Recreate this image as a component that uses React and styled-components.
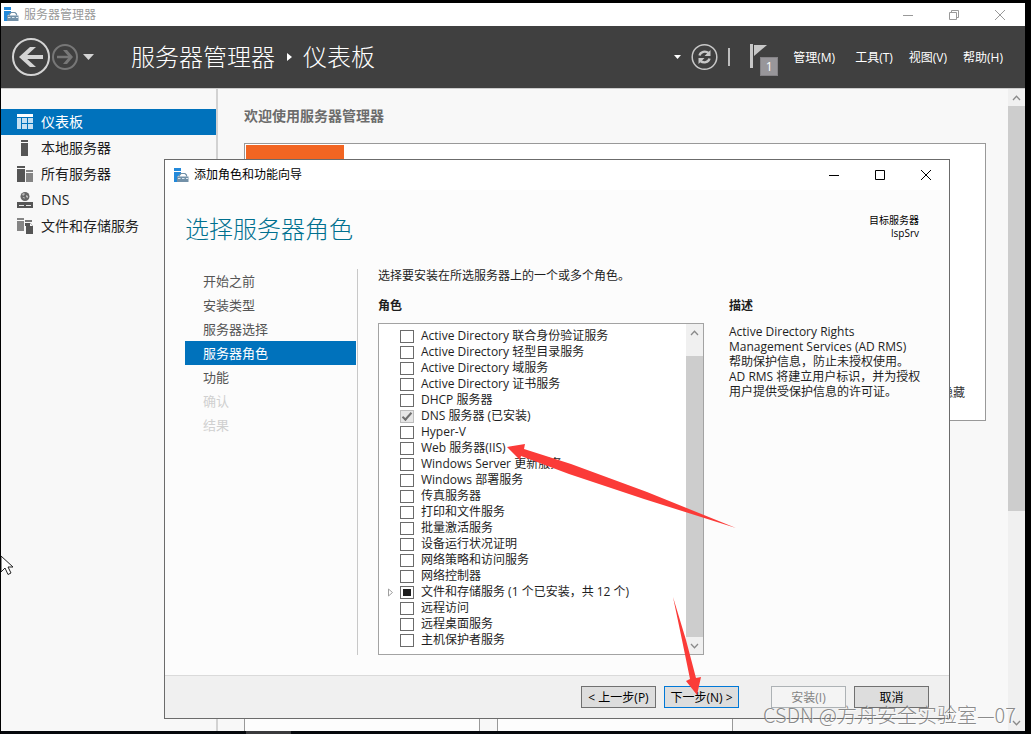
import React from "react";
import styled, { createGlobalStyle, css } from "styled-components";

const GlobalStyle = createGlobalStyle`
  *, *::before, *::after { box-sizing: border-box; }
  body {
    margin: 0;
    background: #000;
    font-family: "Open Sans", "Noto Sans CJK SC", sans-serif;
    font-size: 12px;
    line-height: 16px;
    color: #1e1e1e;
  }
  button, input { font: inherit; margin: 0; padding: 0; }
  button { border: 0; background: none; color: inherit; }
  h1, h2, h3, p, ul { margin: 0; padding: 0; font-weight: 400; }
  ul { list-style: none; }
  svg { display: block; }
`;

const Screen = styled.div`
  position: relative;
  display: flex;
  flex-direction: column;
  min-height: 100vh;
  padding: 3px 6px 0 1px;
  overflow: hidden;
`;

const Taskbar = styled.footer`
  height: 3px;
  padding-left: 245px;
  background: #05080c;
`;

const TaskItem = styled.div`
  width: 45px;
  height: 3px;
  background: #3a3a3c;
`;

const ManagerWindow = styled.div`
  flex: 1;
  display: flex;
  flex-direction: column;
  background: #f8f8f8;
`;

const TitleBar = styled.div`
  display: flex;
  align-items: center;
  gap: 5px;
  height: ${(p) => (p.$dialog ? "30px" : "23px")};
  padding-left: ${(p) => (p.$dialog ? "9px" : "3px")};
  padding-right: ${(p) => (p.$dialog ? "0" : "2px")};
  background: #fff;
  color: ${(p) => (p.$dialog ? "#000" : "#999")};
`;

const TitleText = styled.span`
  flex: 1;
`;

const CaptionGroup = styled.div`
  display: flex;
`;

const CaptionButton = styled.button`
  display: flex;
  justify-content: center;
  width: 46px;
`;

const Header = styled.header`
  display: flex;
  align-items: center;
  height: 62px;
  padding: 0 22px 0 10px;
  background: #404040;
  color: #fff;
`;

const NavButtons = styled.div`
  display: flex;
  align-items: center;
  width: 120px;
`;

const Crumbs = styled.h1`
  flex: 1;
  display: flex;
  align-items: center;
  gap: 11px;
  font-size: 24px;
  line-height: 32px;
  font-weight: 300;
`;

const HeaderTools = styled.div`
  display: flex;
  align-items: center;
  gap: 10px;
`;

const HeaderRule = styled.span`
  width: 2px;
  height: 18px;
  background: #bdbdbd;
`;

const FlagButton = styled.button`
  position: relative;
  width: 28px;
  height: 32px;
  margin: 0 5px 0 10px;
`;

const FlagBadge = styled.span`
  position: absolute;
  right: 0;
  bottom: -3px;
  width: 18px;
  height: 19px;
  background: #98969a;
  border: 1px solid #858387;
  color: #fff;
  line-height: 18px;
  text-align: center;
`;

const MenuBar = styled.nav`
  display: flex;
  gap: 16px;
  padding-top: 2px;
`;

const MenuItem = styled.button`
  &:first-child {
    margin-right: 4px;
  }
`;

const Body = styled.div`
  flex: 1;
  display: flex;
  border-top: 1px solid #ccc;
`;

const SideNav = styled.nav`
  flex: 0 0 217px;
  padding-top: 20px;
  border-right: 2px solid #d2d2d2;
`;

const SideLink = styled.a`
  display: flex;
  align-items: center;
  gap: 8px;
  height: 26px;
  padding-left: 16px;
  font-size: 14px;
  line-height: 20px;
  text-decoration: none;
  color: ${(p) => (p.$active ? "#fff" : "#1e1e1e")};
  background: ${(p) => (p.$active ? "#0072bc" : "transparent")};
`;

const Dashboard = styled.main`
  flex: 1;
  display: flex;
  flex-direction: column;
  padding: 17px 22px 0 26px;
`;

const DashboardTitle = styled.h2`
  font-size: 14px;
  line-height: 20px;
  font-weight: 700;
  color: #6c6c6c;
`;

const WelcomeTile = styled.section`
  display: flex;
  flex-direction: column;
  justify-content: space-between;
  align-items: flex-end;
  min-height: 278px;
  margin-top: 17px;
  padding: 1px;
  border: 1px solid #999;
  background: #fff;
`;

const QuickStart = styled.div`
  align-self: flex-start;
  width: 98px;
  height: 128px;
  background: #f26522;
`;

const HideLink = styled.a`
  padding: 0 19px 18px 0;
  color: #333;
  text-decoration: none;
`;

const TileRow = styled.div`
  flex: 1;
  display: flex;
  gap: 17px;
  margin-top: 60px;
`;

const Tile = styled.section`
  flex: 0 0 236px;
  border: 1px solid #999;
  border-bottom: 0;
  background: #fdfdfd;
`;

const ScrollTrack = styled.div`
  display: flex;
  flex-direction: column;
  flex: 0 0 17px;
  background: #f0f0f0;
`;

const ScrollArrow = styled.button`
  display: flex;
  justify-content: center;
  align-items: center;
  height: 17px;
`;

const ScrollThumb = styled.div`
  flex: ${(p) => p.$share};
  margin-top: ${(p) => p.$start || 0}px;
  background: #cdcdcd;
`;

const ScrollRest = styled.div`
  flex: ${(p) => p.$share};
`;

const Dialog = styled.section`
  position: absolute;
  left: 164px;
  right: 81px;
  top: 159px;
  border: 1px solid #6b6b6b;
  background: #fcfcfc;
`;

const DialogHead = styled.div`
  display: flex;
  justify-content: space-between;
  padding: 24px 30px 25px 20px;
`;

const DialogTitle = styled.h2`
  font-size: 24px;
  line-height: 30px;
  font-weight: 300;
  color: #00708f;
`;

const Target = styled.p`
  font-size: 10px;
  line-height: 13px;
  text-align: right;
  color: #000;
`;

const DialogBody = styled.div`
  display: flex;
  gap: 20px;
  padding: 0 24px 20px 20px;
`;

const Steps = styled.ul`
  flex: 0 0 173px;
  padding-right: 1px;
  border-right: 1px solid #c8c8c8;
`;

const stepTone = {
  normal: "#555",
  active: "#fff",
  disabled: "#d0d0d0",
};

const Step = styled.li`
  height: 24px;
  padding-left: 18px;
  font-size: 13px;
  line-height: 24px;
  color: ${(p) => stepTone[p.$tone]};
  ${(p) =>
    p.$tone === "active" &&
    css`
      background: #0072bc;
    `}
`;

const Pane = styled.div`
  flex: 1;
  display: grid;
  grid-template-columns: 163fr 98fr;
  column-gap: 25px;
`;

const Intro = styled.p`
  grid-column: 1 / -1;
  line-height: 14px;
  margin-bottom: 16px;
`;

const Label = styled.h3`
  font-size: 12px;
  line-height: 14px;
  font-weight: 700;
  margin-bottom: 10px;
`;

const RoleBox = styled.div`
  display: flex;
  border: 1px solid #a3a3a3;
  background: #fff;
`;

const RoleList = styled.ul`
  flex: 1;
  padding: 4px 0 6px 8px;
`;

const RoleRow = styled.li`
  display: flex;
  align-items: center;
  height: 16px;
`;

const Expander = styled.span`
  width: 13px;
`;

const RoleLabel = styled.label`
  display: flex;
  align-items: center;
  gap: 7px;
  white-space: nowrap;
`;

const CheckBox = styled.input`
  appearance: none;
  display: grid;
  place-items: center;
  width: 14px;
  height: 13px;
  border: 1px solid #6b6b6b;
  background: #fff;

  &:indeterminate::before {
    content: "";
    width: 8px;
    height: 7px;
    background: #1e1e1e;
  }

  &:checked {
    border-color: #bcbcbc;
    background: #e6e6e6;
  }

  &:checked::before {
    content: "";
    width: 10px;
    height: 5px;
    border-left: 2px solid #6f6f6f;
    border-bottom: 2px solid #6f6f6f;
    transform: translateY(-1px) rotate(-48deg);
  }
`;

const Description = styled.p`
  margin-top: 11px;
  line-height: 15px;
  white-space: pre-line;
`;

const DialogFooter = styled.div`
  display: flex;
  justify-content: flex-end;
  gap: 8px;
  padding: 10px 20px;
  border-top: 1px solid #dadada;
  background: #f0f0f0;
`;

const DialogButton = styled.button`
  width: 75px;
  height: 22px;
  padding-top: 2px;
  border: 1px solid ${(p) => (p.$primary ? "#0078d7" : "#707070")};
  background: #ddd;
  color: #000;
  white-space: nowrap;

  &:disabled {
    border-color: #adb2b5;
    background: #f4f4f4;
    color: #838383;
  }
`;

const ButtonGroup = styled.div`
  display: flex;
  gap: 8px;
  margin-right: ${(p) => (p.$spaced ? "24px" : "0")};
`;

const Marker = styled.svg`
  position: absolute;
  left: ${(p) => p.$x}px;
  top: ${(p) => p.$y}px;
  pointer-events: none;
`;

const Watermark = styled.div`
  position: absolute;
  right: 15px;
  bottom: 5px;
  font-family: "Noto Sans CJK SC", sans-serif;
  font-size: 20px;
  line-height: 28px;
  font-weight: 300;
  color: rgba(110, 110, 110, 0.8);
  text-shadow: 1px 1px 0 rgba(255, 255, 255, 0.7);
  white-space: nowrap;
`;

function AppIcon() {
  return (
    <svg width="15" height="15" viewBox="0 0 15 15" aria-hidden="true">
      <path d="M0 0h7v3H0zM0 4h7v2L3 9v5H0z" fill="#2389da" />
      <path d="M3 8.500h11.500V14H3z" fill="#7391a8" />
      <path d="M5.500 8.500V7L7 5.500h4L12.500 7v1.500" fill="none" stroke="#7391a8" strokeWidth="1.200" />
      <path d="M4 10.500h2.500M8 10.500h2.500M12 10.500h2" stroke="#dce7ef" />
    </svg>
  );
}

function Caption({ kind, muted, label }) {
  return (
    <CaptionButton aria-label={label}>
      <svg width="12" height="12" viewBox="0 0 12 12" fill="none" stroke={muted ? "#999" : "#000"}>
        {kind === "min" && <path d="M1 6.500h10" />}
        {kind === "max" && <path d="M1.500 1.500h9v9h-9z" />}
        {kind === "restore" && <path d="M1.500 3.500h7v7h-7zM3.500 3.500v-2h7v7h-2" />}
        {kind === "close" && <path d="M1 1l10 10M11 1L1 11" />}
      </svg>
    </CaptionButton>
  );
}

function Chevron({ down }) {
  return (
    <svg width="9" height="6" viewBox="0 0 9 6" fill="none" stroke="#8a8a8a" strokeWidth="1.3">
      <path d={down ? "M1 1l3.500 3.700L8 1" : "M1 5l3.500-3.700L8 5"} />
    </svg>
  );
}

function SideIcon({ kind }) {
  return (
    <svg width="16" height="16" viewBox="0 0 16 16" fill="#555" aria-hidden="true">
      {kind === "dashboard" && (
        <>
          <path d="M0 0h16v3H0z" fill="#fff" />
          <path d="M0 4h4v11H0zM5 4h5v5H5zM11 4h5v5h-5zM5 10h5v5H5zM11 10h5v5h-5z" fill="#c5e0f2" />
        </>
      )}
      {kind === "local" && <path d="M4 0h7v2H4zM4 3h7v13H4z" />}
      {kind === "all" && (
        <>
          <path d="M0 0h8v2H0zM0 3h8v13H0z" />
          <path d="M9 4h7v2H9zM9 7h7v9H9z" fill="#858585" />
        </>
      )}
      {kind === "dns" && (
        <>
          <circle cx="8" cy="4.500" r="4.500" fill="#666" />
          <path d="M5 2l2-1 1 1-2 2zM9 3l2 1v2l-2-1zM5.500 5h2v2z" fill="#bbb" />
          <path d="M0 8h3l2 1.500h6L13 8h3v8H0z" fill="#f8f8f8" />
          <path d="M0 10h16v6H0z" />
          <path d="M2 13h5v1H2zM9 13h5v1H9z" fill="#e8e8e8" />
        </>
      )}
      {kind === "storage" && (
        <>
          <path d="M0 0h7v2H0zM0 3h7v10H0z" fill="#858585" />
          <path d="M8 2h7v2H8z" fill="#777" />
          <path d="M8 5h5.500L16 8v8H9V8H8z" />
          <path d="M13 5v3h3z" fill="#f8f8f8" />
        </>
      )}
    </svg>
  );
}

const sideItems = [
  ["dashboard", "仪表板"],
  ["local", "本地服务器"],
  ["all", "所有服务器"],
  ["dns", "DNS"],
  ["storage", "文件和存储服务"],
];

const steps = [
  ["开始之前", "normal"],
  ["安装类型", "normal"],
  ["服务器选择", "normal"],
  ["服务器角色", "active"],
  ["功能", "normal"],
  ["确认", "disabled"],
  ["结果", "disabled"],
];

const roles = [
  { name: "Active Directory 联合身份验证服务" },
  { name: "Active Directory 轻型目录服务" },
  { name: "Active Directory 域服务" },
  { name: "Active Directory 证书服务" },
  { name: "DHCP 服务器" },
  { name: "DNS 服务器 (已安装)", installed: true },
  { name: "Hyper-V" },
  { name: "Web 服务器(IIS)" },
  { name: "Windows Server 更新服务" },
  { name: "Windows 部署服务" },
  { name: "传真服务器" },
  { name: "打印和文件服务" },
  { name: "批量激活服务" },
  { name: "设备运行状况证明" },
  { name: "网络策略和访问服务" },
  { name: "网络控制器" },
  { name: "文件和存储服务 (1 个已安装，共 12 个)", partial: true },
  { name: "远程访问" },
  { name: "远程桌面服务" },
  { name: "主机保护者服务" },
];

const description = `Active Directory Rights
Management Services (AD RMS)
帮助保护信息，防止未授权使用。
AD RMS 将建立用户标识，并为授权
用户提供受保护信息的许可证。`;

function Role({ name, installed, partial }) {
  return (
    <RoleRow>
      <Expander>
        {partial && (
          <svg width="7" height="9" viewBox="0 0 7 9" fill="none" stroke="#a0a0a0">
            <path d="M1.500 1v7l4-3.500z" />
          </svg>
        )}
      </Expander>
      <RoleLabel>
        <CheckBox
          type="checkbox"
          defaultChecked={installed}
          disabled={installed}
          ref={(el) => {
            if (el && partial) el.indeterminate = true;
          }}
        />
        {name}
      </RoleLabel>
    </RoleRow>
  );
}

function WizardDialog() {
  return (
    <Dialog role="dialog" aria-label="添加角色和功能向导">
      <TitleBar $dialog>
        <AppIcon />
        <TitleText>添加角色和功能向导</TitleText>
        <CaptionGroup>
          <Caption kind="min" label="最小化" />
          <Caption kind="max" label="最大化" />
          <Caption kind="close" label="关闭" />
        </CaptionGroup>
      </TitleBar>
      <DialogHead>
        <DialogTitle>选择服务器角色</DialogTitle>
        <Target>
          目标服务器
          <br />
          lspSrv
        </Target>
      </DialogHead>
      <DialogBody>
        <Steps>
          {steps.map(([text, tone]) => (
            <Step key={text} $tone={tone}>
              {text}
            </Step>
          ))}
        </Steps>
        <Pane>
          <Intro>选择要安装在所选服务器上的一个或多个角色。</Intro>
          <div>
            <Label>角色</Label>
            <RoleBox>
              <RoleList>
                {roles.map((role) => (
                  <Role key={role.name} {...role} />
                ))}
              </RoleList>
              <ScrollTrack>
                <ScrollArrow aria-label="向上滚动">
                  <Chevron />
                </ScrollArrow>
                <ScrollThumb $share={1} $start={15} />
                <ScrollArrow aria-label="向下滚动">
                  <Chevron down />
                </ScrollArrow>
              </ScrollTrack>
            </RoleBox>
          </div>
          <div>
            <Label>描述</Label>
            <Description>{description}</Description>
          </div>
        </Pane>
      </DialogBody>
      <DialogFooter>
        <ButtonGroup $spaced>
          <DialogButton>&lt; 上一步(P)</DialogButton>
          <DialogButton $primary>下一步(N) &gt;</DialogButton>
        </ButtonGroup>
        <ButtonGroup>
          <DialogButton disabled>安装(I)</DialogButton>
          <DialogButton>取消</DialogButton>
        </ButtonGroup>
      </DialogFooter>
      <Marker $x={342} $y={283} width="230" height="86" viewBox="0 0 230 86">
        <path d="M0 4L18 1L17 6L64 21L140 49L229 85L137 56L62 31L14 13L13 17Z" fill="#fb3b38" />
      </Marker>
      <Marker $x={507} $y={436} width="30" height="100" viewBox="0 0 30 100">
        <path d="M1 1L14 44L24 82L29 81L25 99L14 85L18 83L10 44Z" fill="#fb3b38" />
      </Marker>
    </Dialog>
  );
}

export default function App() {
  return (
    <Screen>
      <GlobalStyle />
      <ManagerWindow>
        <TitleBar>
          <AppIcon />
          <TitleText>服务器管理器</TitleText>
          <CaptionGroup>
            <Caption kind="min" label="最小化" muted />
            <Caption kind="restore" label="还原" muted />
            <Caption kind="close" label="关闭" muted />
          </CaptionGroup>
        </TitleBar>
        <Header>
          <NavButtons>
            <button aria-label="后退">
              <svg width="40" height="40" viewBox="0 0 40 40" fill="none" stroke="#d4d4d4">
                <circle cx="20" cy="20" r="18" strokeWidth="2" />
                <path d="M32 20H12" strokeWidth="4" />
                <path d="M25 10h-6L8 20l11 10h6L14 20z" fill="#d4d4d4" stroke="none" />
              </svg>
            </button>
            <button aria-label="前进">
              <svg width="27" height="28" viewBox="0 0 27 28" fill="none" stroke="#777">
                <circle cx="14" cy="14" r="12" strokeWidth="2" />
                <path d="M6 14h13" strokeWidth="2.500" />
                <path d="M12 7l4 0 6 7-6 7h-4l6-7z" fill="#777" stroke="none" />
              </svg>
            </button>
            <button aria-label="历史记录">
              <svg width="20" height="8" viewBox="0 0 20 8">
                <path d="M5 1h11l-5.500 6z" fill="#d4d4d4" />
              </svg>
            </button>
          </NavButtons>
          <Crumbs>
            服务器管理器
            <svg width="6" height="10" viewBox="0 0 6 10">
              <path d="M1 1l5 4-5 4z" fill="#fff" />
            </svg>
            仪表板
          </Crumbs>
          <HeaderTools>
            <button aria-label="选项">
              <svg width="7" height="5" viewBox="0 0 7 5">
                <path d="M0 0h7L3.500 4z" fill="#fff" />
              </svg>
            </button>
            <button aria-label="刷新">
              <svg width="27" height="28" viewBox="0 0 27 28" fill="none" stroke="#c8c8c8">
                <circle cx="13.500" cy="14" r="12.300" strokeWidth="1.500" />
                <path d="M8.500 12.500c1-4 6-5 9-2.500M18.500 15.500c-1 4-6 5-9 2.500" strokeWidth="2.400" />
                <path d="M19.500 7v6h-6zM7.500 21v-6h6z" fill="#c8c8c8" stroke="none" />
              </svg>
            </button>
            <HeaderRule />
            <FlagButton aria-label="通知">
              <svg width="18" height="26" viewBox="0 0 18 26" fill="#c8c8c8">
                <path d="M0 0h3v24H0zM4 1h13L4 12z" />
              </svg>
              <FlagBadge>1</FlagBadge>
            </FlagButton>
            <MenuBar>
              <MenuItem>管理(M)</MenuItem>
              <MenuItem>工具(T)</MenuItem>
              <MenuItem>视图(V)</MenuItem>
              <MenuItem>帮助(H)</MenuItem>
            </MenuBar>
          </HeaderTools>
        </Header>
        <Body>
          <SideNav>
            {sideItems.map(([kind, text]) => (
              <SideLink key={kind} href="#" $active={kind === "dashboard"}>
                <SideIcon kind={kind} />
                {text}
              </SideLink>
            ))}
          </SideNav>
          <Dashboard>
            <DashboardTitle>欢迎使用服务器管理器</DashboardTitle>
            <WelcomeTile>
              <QuickStart />
              <HideLink href="#">隐藏</HideLink>
            </WelcomeTile>
            <TileRow>
              <Tile />
              <Tile />
            </TileRow>
          </Dashboard>
          <ScrollTrack>
            <ScrollArrow aria-label="向上滚动">
              <Chevron />
            </ScrollArrow>
            <ScrollThumb $share={2} />
            <ScrollRest $share={1} />
            <ScrollArrow aria-label="向下滚动">
              <Chevron down />
            </ScrollArrow>
          </ScrollTrack>
        </Body>
      </ManagerWindow>
      <Taskbar>
        <TaskItem />
      </Taskbar>
      <WizardDialog />
      <Watermark>CSDN @方舟安全实验室—07</Watermark>
      <Marker $x={1} $y={555} width="14" height="22" viewBox="0 0 14 22">
        <path d="M0 1v16l4-4 3 6.500 3-1.500-3-6h5z" fill="#fff" stroke="#222" />
      </Marker>
    </Screen>
  );
}
